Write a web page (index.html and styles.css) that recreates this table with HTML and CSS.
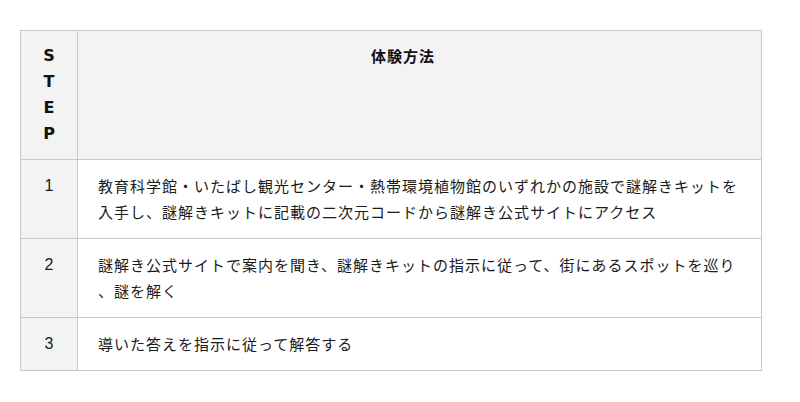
FILE: index.html
```html
<!DOCTYPE html>
<html lang="ja">
	<head>
		<meta charset="UTF-8">
		<link rel="stylesheet" href="styles.css">
		<title>体験方法</title>
	</head>
	<body>
		<div class="container">
			<table class="steps">
				<thead>
					<tr>
						<th class="step-head">STEP</th>
						<th class="method-head">体験方法</th>
					</tr>
				</thead>
				<tbody>
					<tr>
						<td class="num">1</td>
						<td class="desc">教育科学館・いたばし観光センター・熱帯環境植物館のいずれかの施設で謎解きキットを<br>入手し、謎解きキットに記載の二次元コードから謎解き公式サイトにアクセス</td>
					</tr>
					<tr>
						<td class="num">2</td>
						<td class="desc">謎解き公式サイトで案内を聞き、謎解きキットの指示に従って、街にあるスポットを巡り<br>、謎を解く</td>
					</tr>
					<tr>
						<td class="num">3</td>
						<td class="desc">導いた答えを指示に従って解答する</td>
					</tr>
				</tbody>
			</table>
		</div>
	</body>
</html>
```

FILE: styles.css
```css
body {
	margin: 0;
	background: #fff;
	color: #1a1a1a;
	font-family: 'Noto Sans CJK JP', 'Noto Sans', sans-serif;
	font-size: 15px;
}
.container {
	padding: 30px 0 0 20px;
}
table.steps {
	width: 742px;
	border-collapse: collapse;
	line-height: 26px;
}
table.steps th,
table.steps td {
	border: 1px solid #c8c8c8;
	vertical-align: top;
}
thead th {
	background: #f3f3f3;
	font-weight: bold;
	color: #111;
}
th.step-head {
	width: 16px;
	padding: 12px 20px;
	word-break: break-all;
	text-align: center;
	font-family: 'DejaVu Sans', sans-serif;
	font-size: 16px;
	border-right-color: #999;
}
th.method-head {
	padding: 12px 53px 12px 20px;
	text-align: center;
	letter-spacing: 1px;
}
td.num {
	background: #f3f3f3;
	padding: 13px 0;
	text-align: center;
	font-family: 'Liberation Sans', sans-serif;
	font-size: 16px;
	border-right-color: #999;
}
td.desc {
	padding: 13px 10px 13px 20px;
	letter-spacing: 1px;
	white-space: nowrap;
}
```
